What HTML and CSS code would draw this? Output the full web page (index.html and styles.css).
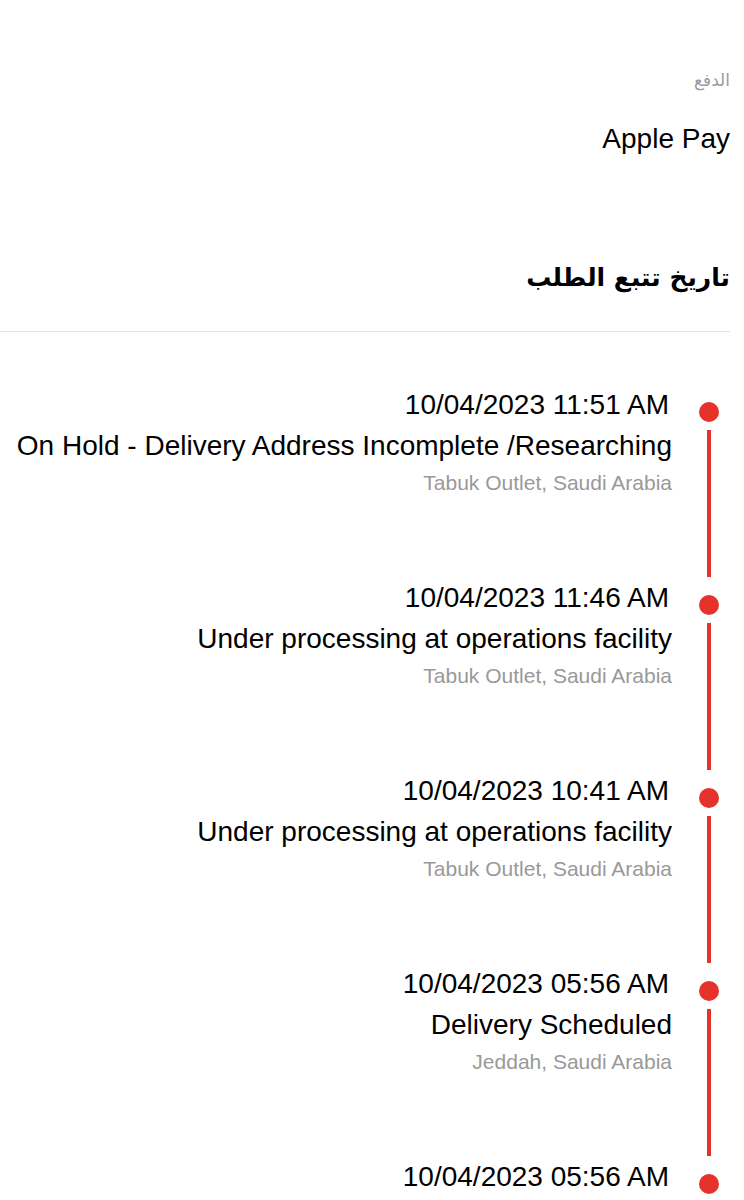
FILE: index.html
```html
<!DOCTYPE html>
<html lang="ar" dir="rtl">

<head>
    <meta charset="UTF-8">
    <meta name="viewport" content="width=device-width, initial-scale=1.0">
    <title>تتبع الطلب</title>
    <link rel="stylesheet" href="styles.css">
</head>

<body>
    <div class="page">
        <section class="payment">
            <p class="label">الدفع</p>
            <p class="value" dir="ltr">Apple Pay</p>
        </section>

        <h2 class="section-title">تاريخ تتبع الطلب</h2>
        <hr class="divider">

        <ul class="timeline">
            <li class="event">
                <div class="marker"><span class="dot"></span><span class="line"></span></div>
                <div class="info" dir="ltr">
                    <p class="date">10/04/2023 11:51 AM</p>
                    <p class="status">On Hold - Delivery Address Incomplete /Researching</p>
                    <p class="place">Tabuk Outlet, Saudi Arabia</p>
                </div>
            </li>
            <li class="event">
                <div class="marker"><span class="dot"></span><span class="line"></span></div>
                <div class="info" dir="ltr">
                    <p class="date">10/04/2023 11:46 AM</p>
                    <p class="status">Under processing at operations facility</p>
                    <p class="place">Tabuk Outlet, Saudi Arabia</p>
                </div>
            </li>
            <li class="event">
                <div class="marker"><span class="dot"></span><span class="line"></span></div>
                <div class="info" dir="ltr">
                    <p class="date">10/04/2023 10:41 AM</p>
                    <p class="status">Under processing at operations facility</p>
                    <p class="place">Tabuk Outlet, Saudi Arabia</p>
                </div>
            </li>
            <li class="event">
                <div class="marker"><span class="dot"></span><span class="line"></span></div>
                <div class="info" dir="ltr">
                    <p class="date">10/04/2023 05:56 AM</p>
                    <p class="status">Delivery Scheduled</p>
                    <p class="place">Jeddah, Saudi Arabia</p>
                </div>
            </li>
            <li class="event last">
                <div class="marker"><span class="dot"></span></div>
                <div class="info" dir="ltr">
                    <p class="date">10/04/2023 05:56 AM</p>
                </div>
            </li>
        </ul>
    </div>
</body>

</html>
```

FILE: styles.css
```css
body {
    font-family: "Liberation Sans", Arial, "DejaVu Sans", sans-serif;
    background-color: #ffffff;
    color: #000000;
    margin: 0;
    padding: 0;
    overflow: hidden;
}

p {
    margin: 0;
}

.page {
    padding: 0 14px 0 0;
}

/* payment block */
.payment {
    padding-top: 67px;
    text-align: right;
}

.payment .label {
    font-family: "DejaVu Sans", sans-serif;
    font-size: 17px;
    line-height: 26px;
    color: #9a9a9e;
}

.payment .value {
    font-size: 28px;
    line-height: 34px;
    margin-top: 29px;
    text-align: right;
}

.section-title {
    font-family: "DejaVu Sans", sans-serif;
    font-weight: bold;
    font-size: 25px;
    line-height: 34px;
    margin: 105px 0 0;
}

.divider {
    border: none;
    border-top: 1px solid #e2e2e2;
    margin: 36px 0 0;
}

/* tracking history */
.timeline {
    list-style: none;
    margin: 56px 0 0;
    padding: 0;
}

.event {
    display: flex;
    height: 193px;
}

.event.last {
    height: auto;
}

.marker {
    width: 42px;
    display: flex;
    flex-direction: column;
    align-items: center;
    padding-top: 14px;
    flex-shrink: 0;
}

.dot {
    width: 20px;
    height: 20px;
    border-radius: 50%;
    background-color: #e5322b;
}

.line {
    width: 4px;
    flex: 1;
    margin: 8px 0 4px;
    background-color: #e5322b;
}

.info {
    flex: 1;
    text-align: right;
    padding-right: 16px;
}

.date {
    font-size: 28px;
    line-height: 34px;
    padding-right: 3px;
}

.status {
    font-size: 28px;
    line-height: 34px;
    margin-top: 7px;
    white-space: nowrap;
}

.place {
    font-size: 21px;
    line-height: 26px;
    margin-top: 7px;
    color: #999999;
}
```
